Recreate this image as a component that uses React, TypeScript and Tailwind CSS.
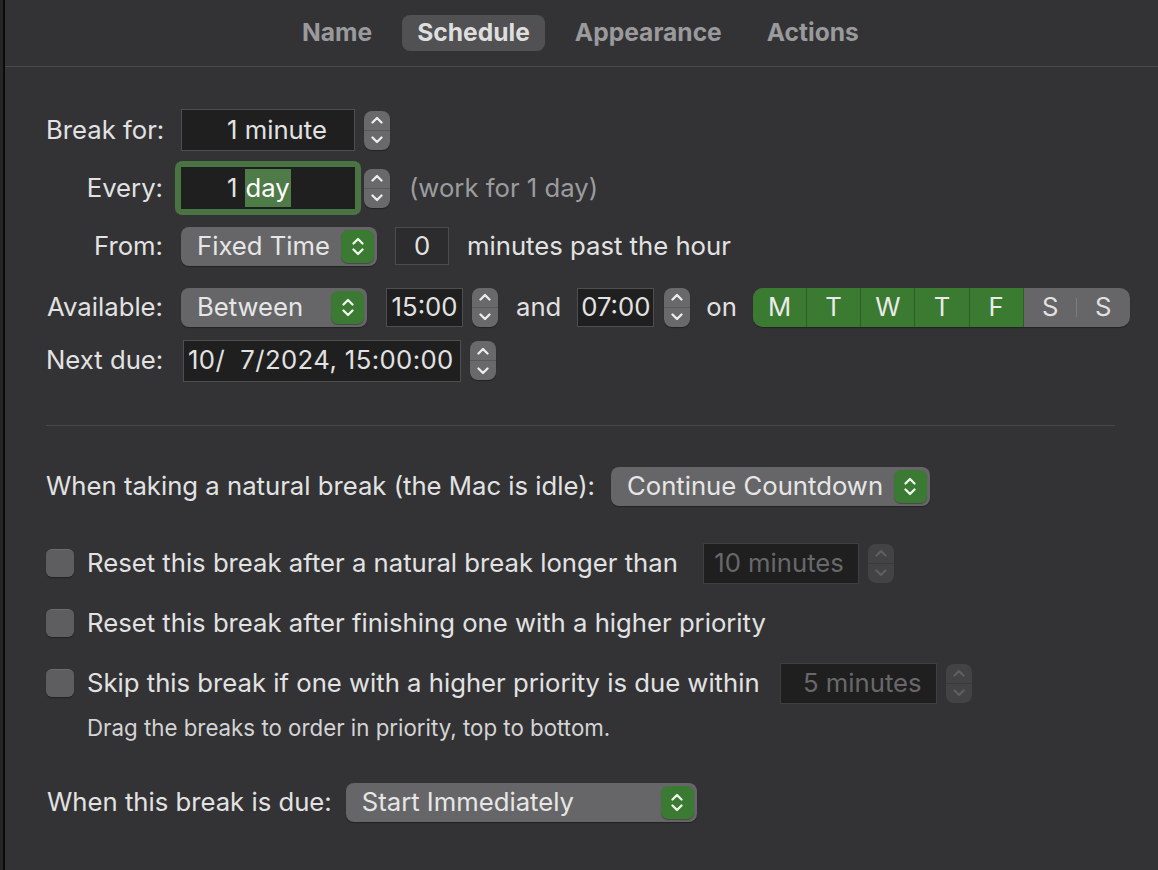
import React from "react";

function Up({ className = "" }: { className?: string }) {
  return (
    <svg width="12" height="8" viewBox="0 0 12 8" className={className}>
      <path d="M1.5 6.5 L6 2 L10.5 6.5" fill="none" stroke="currentColor" strokeWidth="2.3" strokeLinecap="round" strokeLinejoin="round" />
    </svg>
  );
}

function Down({ className = "" }: { className?: string }) {
  return (
    <svg width="12" height="8" viewBox="0 0 12 8" className={className}>
      <path d="M1.5 1.5 L6 6 L10.5 1.5" fill="none" stroke="currentColor" strokeWidth="2.3" strokeLinecap="round" strokeLinejoin="round" />
    </svg>
  );
}

function Stepper({ disabled = false }: { disabled?: boolean }) {
  return (
    <div
      className={
        disabled
          ? "w-[26px] h-[39px] rounded-[8px] flex flex-col shrink-0 bg-[#434345] text-[#5e5e60]"
          : "w-[26px] h-[39px] rounded-[8px] flex flex-col shrink-0 bg-[#69696c] text-[#ececec] shadow-[0_1px_1px_rgba(0,0,0,0.35)]"
      }
    >
      <div className={disabled ? "flex-1 flex items-center justify-center border-b border-[#3a3a3c]" : "flex-1 flex items-center justify-center border-b border-[#58585b]"}>
        <Up />
      </div>
      <div className="flex-1 flex items-center justify-center">
        <Down />
      </div>
    </div>
  );
}

function Popup({ label, className }: { label: string; className: string }) {
  return (
    <div className={"h-[39px] rounded-[8px] bg-[#666668] flex items-center pl-[16px] pr-[3px] shrink-0 shadow-[0_1px_1px_rgba(0,0,0,0.35)] " + className}>
      <span className="flex-1 text-[#e6e6e6] whitespace-nowrap">{label}</span>
      <div className="w-[33px] h-[33px] rounded-[7px] bg-[#3b7a33] text-[#eef3ec] flex flex-col items-center justify-center gap-[3px] shadow-[0_1px_1px_rgba(0,0,0,0.3)]">
        <Up />
        <Down />
      </div>
    </div>
  );
}

function Checkbox() {
  return <div className="w-[28px] h-[28px] rounded-[6px] bg-[#5e5e61] border-t border-[#6c6c6f] shadow-[0_1px_1px_rgba(0,0,0,0.35)] shrink-0" />;
}

const DAYS: { d: string; on: boolean }[] = [
  { d: "M", on: true },
  { d: "T", on: true },
  { d: "W", on: true },
  { d: "T", on: true },
  { d: "F", on: true },
  { d: "S", on: false },
  { d: "S", on: false },
];

function Days() {
  return (
    <div className="flex h-[39px] w-[377px] rounded-[10px] overflow-hidden bg-[#666668] shadow-[0_1px_1px_rgba(0,0,0,0.35)]">
      {DAYS.map((x, i) => (
        <div
          key={i}
          className={
            x.on
              ? "flex-1 flex items-center justify-center bg-[#3a7a31] text-[#eaeaea] border-r border-[#2c5e26]"
              : i === 5
              ? "flex-1 flex items-center justify-center text-[#e2e2e2] relative"
              : "flex-1 flex items-center justify-center text-[#e2e2e2]"
          }
        >
          {x.d}
          {i === 5 ? <span className="absolute right-0 top-[10px] h-[19px] w-px bg-[#7c7c7e]" /> : null}
        </div>
      ))}
    </div>
  );
}

function Label({ children }: { children: React.ReactNode }) {
  return <div className="w-[117px] text-right shrink-0 whitespace-nowrap">{children}</div>;
}

export default function App() {
  return (
    <div className="w-[1158px] h-[870px] bg-[#262626] pl-[3px] pr-[3px] flex [font-family:Inter,'Noto_Sans',sans-serif] text-[25.7px] text-[#e2e2e2] overflow-hidden">
      <div className="flex-1 flex flex-col bg-[#333336] border-l-2 border-[#0a0a0a] border-r border-r-[#5a5a5c] rounded-tr-[14px]">
        <div className="h-[67px] shrink-0 border-b border-[#4a4a4d] flex items-center justify-center gap-[15px] font-bold text-[24.6px] pb-[1px] pr-[12px]">
          <div className="px-[15px] h-[36px] flex items-center text-[#9a9a9c]">Name</div>
          <div className="px-[15px] h-[36px] flex items-center rounded-[8px] bg-[#515154] text-[#dedede]">Schedule</div>
          <div className="px-[15px] h-[36px] flex items-center text-[#9a9a9c]">Appearance</div>
          <div className="px-[15px] h-[36px] flex items-center text-[#9a9a9c]">Actions</div>
        </div>

        <div className="pl-[41px] pr-[38px] flex flex-col">
          {/* Break for */}
          <div className="mt-[40px] h-[46px] flex items-center gap-[18px]">
            <Label>Break for:</Label>
            <div className="flex items-center gap-[9px]">
              <div className="w-[174px] h-[42px] bg-[#1f1f1f] border border-[#4e4e50] flex items-center pl-[45px]">1 minute</div>
              <Stepper />
            </div>
          </div>

          {/* Every */}
          <div className="mt-[8px] h-[54px] flex items-center gap-[12px]">
            <Label>Every:</Label>
            <div className="flex items-center gap-[3px]">
              <div className="p-[6px] rounded-[7px] bg-[#4a7444]">
                <div className="w-[174px] h-[42px] bg-[#1f1f1f] flex items-center pl-[46px]">
                  1<span className="ml-[8px] bg-[#4f7b49] text-white pr-[1px]">day</span>
                </div>
              </div>
              <Stepper />
            </div>
            <div className="ml-[7px] text-[#9c9c9e]">(work for 1 day)</div>
          </div>

          {/* From */}
          <div className="mt-[11px] h-[40px] flex items-center gap-[18px]">
            <Label>From:</Label>
            <Popup label="Fixed Time" className="w-[196px]" />
            <div className="w-[54px] h-[38px] bg-[#2c2c2e] border border-[#4c4c4e] flex items-center justify-center">0</div>
            <div className="whitespace-nowrap">minutes past the hour</div>
          </div>

          {/* Available */}
          <div className="mt-[21px] h-[40px] flex items-center gap-[18px]">
            <Label>Available:</Label>
            <Popup label="Between" className="w-[186px]" />
            <div className="flex items-center gap-[9px] ml-[1px]">
              <div className="w-[77px] h-[39px] bg-[#1f1f1f] border border-[#4e4e50] flex items-center justify-center">15:00</div>
              <Stepper />
            </div>
            <div>and</div>
            <div className="flex items-center gap-[10px] -ml-[2px]">
              <div className="w-[77px] h-[39px] bg-[#1f1f1f] border border-[#4e4e50] flex items-center justify-center">07:00</div>
              <Stepper />
            </div>
            <div className="-ml-[2px]">on</div>
            <div className="-ml-[2px]">
              <Days />
            </div>
          </div>

          {/* Next due */}
          <div className="mt-[12px] h-[43px] flex items-center gap-[18px]">
            <Label>Next due:</Label>
            <div className="flex items-center gap-[9px] ml-[2px]">
              <div className="w-[278px] h-[42px] bg-[#1f1f1f] border border-[#4e4e50] flex items-center pl-[4px] whitespace-pre tracking-[0.4px]">10/  7/2024, 15:00:00</div>
              <Stepper />
            </div>
          </div>

          <div className="mt-[43px] h-px w-[1069px] bg-[#47474a]" />

          {/* Natural break */}
          <div className="mt-[41px] h-[39px] flex items-center gap-[16px]">
            <div className="whitespace-nowrap">When taking a natural break (the Mac is idle):</div>
            <Popup label="Continue Countdown" className="w-[319px]" />
          </div>

          {/* Checkboxes */}
          <div className="mt-[36px] h-[42px] flex items-center">
            <Checkbox />
            <div className="ml-[13px] whitespace-nowrap">Reset this break after a natural break longer than</div>
            <div className="ml-[25px] flex items-center gap-[9px]">
              <div className="w-[156px] h-[41px] bg-[#1f1f1f] border border-[#3f3f41] flex items-center justify-end pr-[14px] text-[#68686a]">10 minutes</div>
              <Stepper disabled />
            </div>
          </div>

          <div className="mt-[18px] h-[42px] flex items-center">
            <Checkbox />
            <div className="ml-[13px] whitespace-nowrap">Reset this break after finishing one with a higher priority</div>
          </div>

          <div className="mt-[18px] h-[42px] flex items-center">
            <Checkbox />
            <div className="ml-[13px] whitespace-nowrap">Skip this break if one with a higher priority is due within</div>
            <div className="ml-[20px] flex items-center gap-[9px]">
              <div className="w-[157px] h-[41px] bg-[#1f1f1f] border border-[#3f3f41] flex items-center justify-end pr-[14px] text-[#68686a]">5 minutes</div>
              <Stepper disabled />
            </div>
          </div>

          <div className="mt-[12px] pl-[41px] text-[22.3px] text-[#d4d4d4] leading-[24px]">Drag the breaks to order in priority, top to bottom.</div>

          {/* Due */}
          <div className="mt-[43px] h-[39px] flex items-center gap-[14px] pl-[1px]">
            <div className="whitespace-nowrap">When this break is due:</div>
            <Popup label="Start Immediately" className="w-[351px]" />
          </div>
        </div>
      </div>
    </div>
  );
}
